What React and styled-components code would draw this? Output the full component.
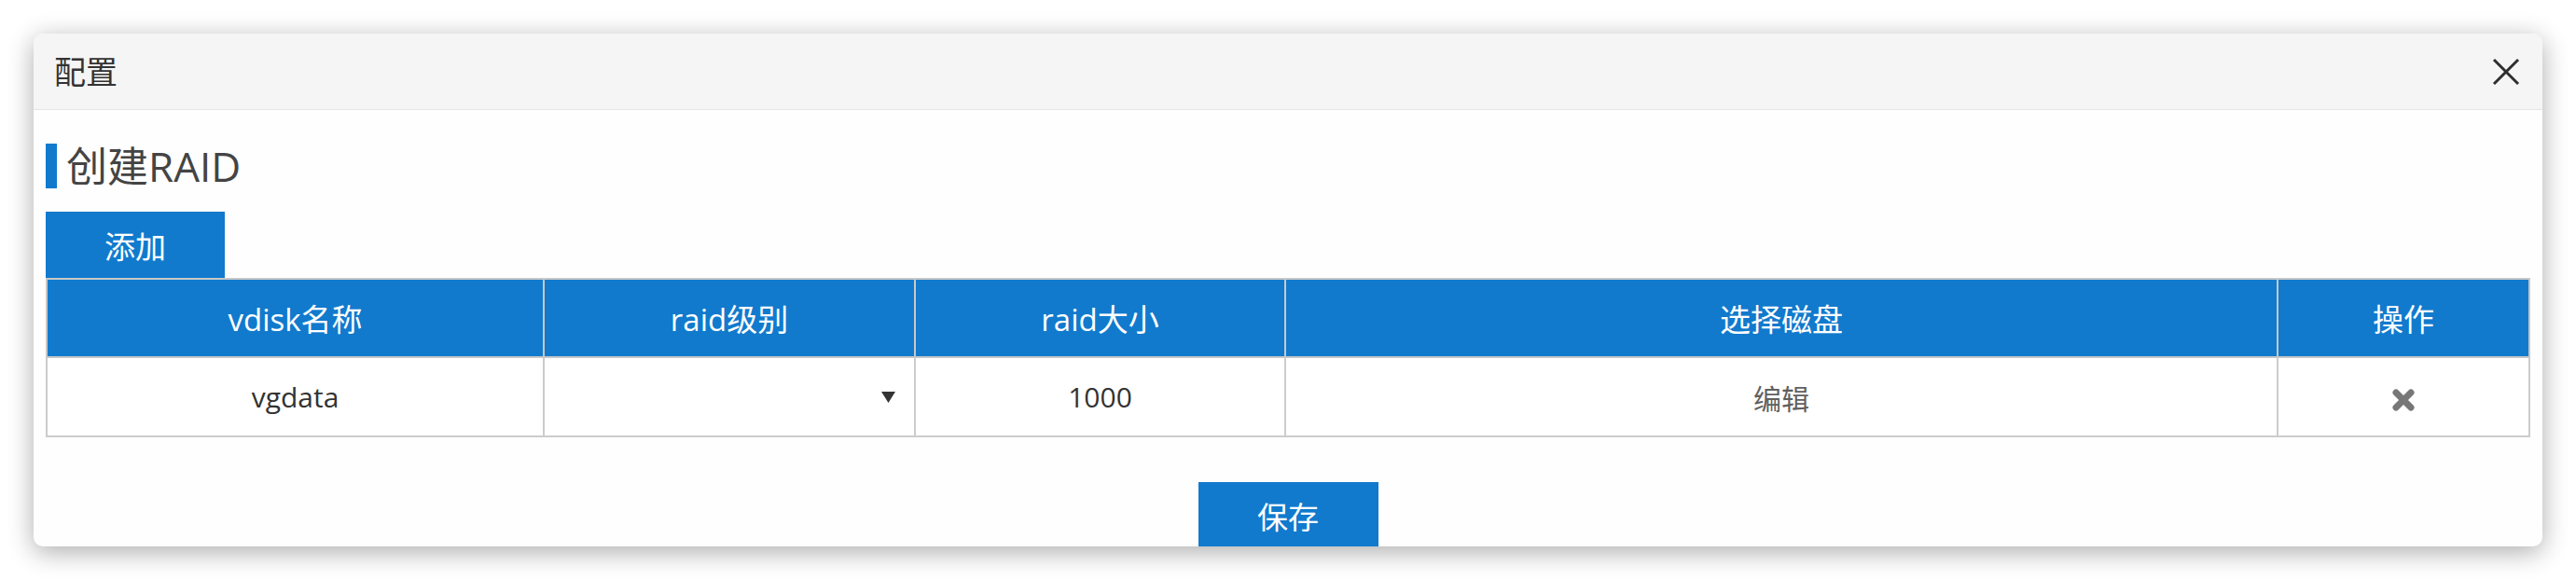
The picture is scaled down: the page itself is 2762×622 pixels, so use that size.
import React from "react";
import styled, { createGlobalStyle } from "styled-components";

const GlobalStyle = createGlobalStyle`
  html, body {
    margin: 0;
    padding: 0;
    background: #ffffff;
  }
  body {
    font-family: "Open Sans", "Noto Sans CJK SC", sans-serif;
    color: #333;
  }
`;

const Page = styled.div`
  padding: 36px;
`;

const Dialog = styled.div`
  height: 550px;
  background: #fefefe;
  border-radius: 10px;
  box-shadow: 0 6px 28px rgba(0, 0, 0, 0.33);
  overflow: hidden;
  display: flex;
  flex-direction: column;
`;

const Header = styled.div`
  height: 81px;
  flex: none;
  background: #f5f5f5;
  border-bottom: 1px solid #e6e6e6;
  display: flex;
  align-items: center;
  justify-content: space-between;
  padding: 0 24px 0 22px;
`;

const Title = styled.div`
  font-size: 34px;
  color: #333;
  line-height: 1;
`;

const CloseButton = styled.button`
  border: none;
  background: none;
  padding: 0;
  width: 30px;
  height: 30px;
  display: flex;
  cursor: pointer;
`;

const Body = styled.div`
  padding: 36px 13px 0;
  display: flex;
  flex-direction: column;
`;

const SectionTitle = styled.div`
  display: flex;
  align-items: center;
  gap: 10px;
  height: 48px;
  font-size: 44px;
  color: #444;
  line-height: 1;
`;

const TitleBar = styled.span`
  width: 12px;
  height: 48px;
  background: #117acd;
  flex: none;
`;

const Toolbar = styled.div`
  margin-top: 25px;
  display: flex;
`;

const PrimaryButton = styled.button`
  width: ${(p) => p.$width}px;
  height: 71px;
  flex: none;
  border: none;
  background: #117acd;
  color: #fff;
  font-family: "Open Sans", "Noto Sans CJK SC", sans-serif;
  font-size: 33px;
  padding: 0;
  cursor: pointer;
`;

const Table = styled.table`
  width: 100%;
  border-collapse: collapse;
  table-layout: fixed;
  border: 2px solid #cccccc;
`;

const HeadCell = styled.th`
  width: ${(p) => (p.$width ? `${p.$width}px` : "auto")};
  height: 82px;
  background: #117acd;
  color: #fff;
  font-weight: normal;
  font-size: 33px;
  border: 2px solid #c8c8c8;
  padding: 0;
  text-align: center;
`;

const Cell = styled.td`
  height: 83px;
  border: 2px solid #cccccc;
  background: #fff;
  font-size: 30px;
  color: ${(p) => (p.$muted ? "#606060" : "#333")};
  text-align: center;
  padding: 0;
`;

const SelectBox = styled.div`
  display: flex;
  justify-content: flex-end;
  align-items: center;
  padding-right: 20px;
  font-size: 18px;
  color: #333;
`;

const Footer = styled.div`
  display: flex;
  justify-content: center;
  margin-top: 48px;
`;

const Arrow = () => (
  <svg width="15" height="12" viewBox="0 0 15 12">
    <path d="M0 0 H15 L7.5 12 Z" fill="#333" />
  </svg>
);

const CloseIcon = () => (
  <svg width="30" height="30" viewBox="0 0 30 30">
    <path d="M2 2 L28 28 M28 2 L2 28" stroke="#2e2e2e" strokeWidth="3" fill="none" />
  </svg>
);

const RemoveIcon = () => (
  <svg width="26" height="26" viewBox="0 0 26 26" style={{ verticalAlign: "middle" }}>
    <path d="M5 5 L21 21 M21 5 L5 21" stroke="#777" strokeWidth="7" strokeLinecap="round" fill="none" />
  </svg>
);

const columns = [
  { label: "vdisk名称", width: 531 },
  { label: "raid级别", width: 396 },
  { label: "raid大小", width: 395 },
  { label: "选择磁盘", width: 1062 },
  { label: "操作" },
];

export default function App() {
  return (
    <>
      <GlobalStyle />
      <Page>
        <Dialog>
          <Header>
            <Title>配置</Title>
            <CloseButton aria-label="close">
              <CloseIcon />
            </CloseButton>
          </Header>
          <Body>
            <SectionTitle>
              <TitleBar />
              创建RAID
            </SectionTitle>
            <Toolbar>
              <PrimaryButton $width={192}>添加</PrimaryButton>
            </Toolbar>
            <Table>
              <thead>
                <tr>
                  {columns.map((c) => (
                    <HeadCell key={c.label} $width={c.width}>
                      {c.label}
                    </HeadCell>
                  ))}
                </tr>
              </thead>
              <tbody>
                <tr>
                  <Cell>vgdata</Cell>
                  <Cell>
                    <SelectBox>
                      <Arrow />
                    </SelectBox>
                  </Cell>
                  <Cell>1000</Cell>
                  <Cell $muted>编辑</Cell>
                  <Cell>
                    <RemoveIcon />
                  </Cell>
                </tr>
              </tbody>
            </Table>
            <Footer>
              <PrimaryButton $width={193}>保存</PrimaryButton>
            </Footer>
          </Body>
        </Dialog>
      </Page>
    </>
  );
}
